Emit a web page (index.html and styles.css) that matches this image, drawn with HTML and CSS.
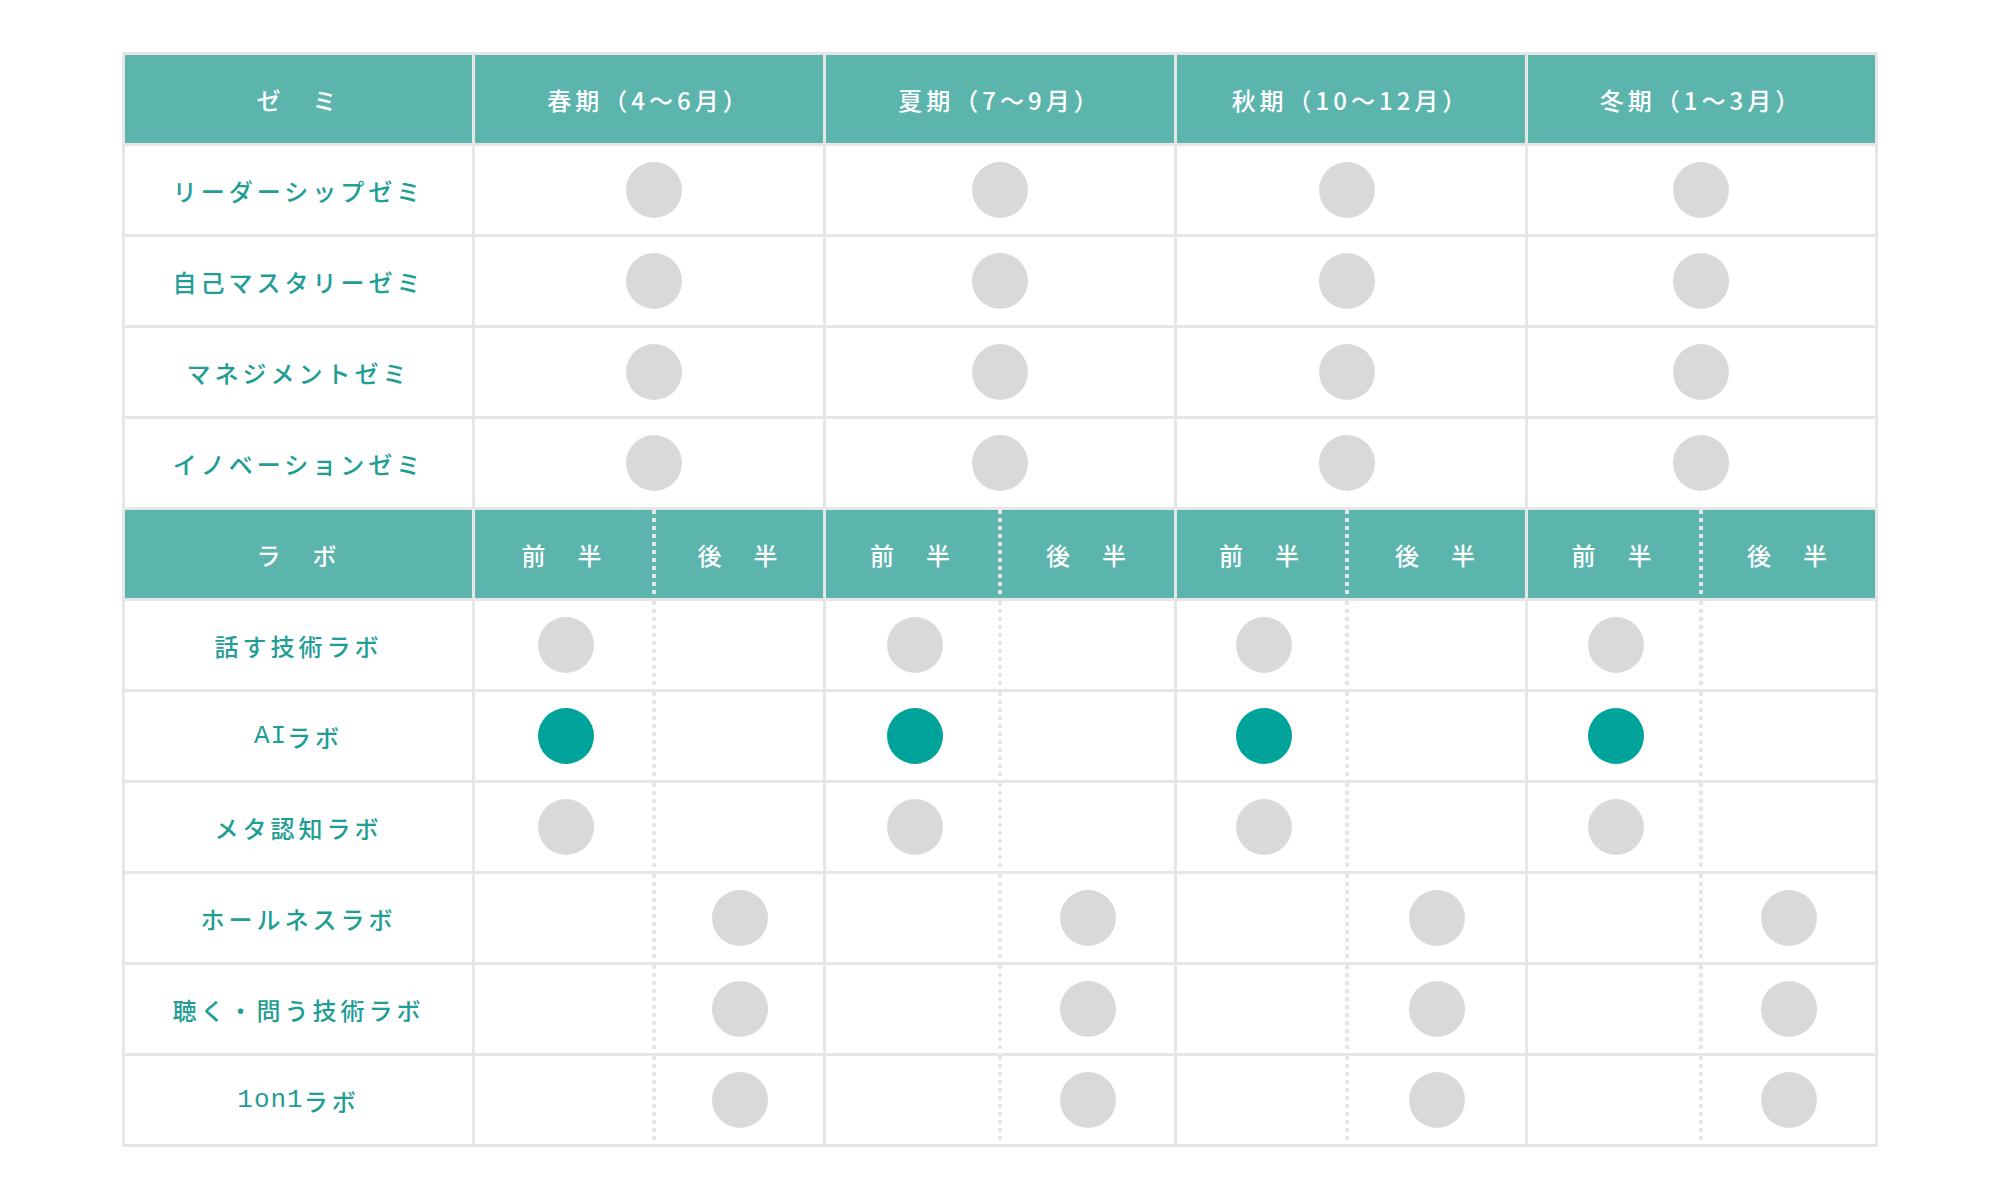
FILE: index.html
```html
<!DOCTYPE html>
<html lang="ja">
<head>
<meta charset="utf-8">
<title>ゼミ・ラボ 年間スケジュール</title>
<link rel="stylesheet" href="styles.css">
</head>
<body>
<div class="schedule">
  <div class="row">
    <div class="cell head">ゼ　ミ</div>
    <div class="cell head">春期（4～6月）</div>
    <div class="cell head">夏期（7～9月）</div>
    <div class="cell head">秋期（10～12月）</div>
    <div class="cell head">冬期（1～3月）</div>
  </div>

  <div class="row">
    <div class="cell label">リーダーシップゼミ</div>
    <div class="cell seminar s1"><span class="dot"></span></div>
    <div class="cell seminar s2"><span class="dot"></span></div>
    <div class="cell seminar s3"><span class="dot"></span></div>
    <div class="cell seminar s4"><span class="dot"></span></div>
  </div>
  <div class="row">
    <div class="cell label">自己マスタリーゼミ</div>
    <div class="cell seminar s1"><span class="dot"></span></div>
    <div class="cell seminar s2"><span class="dot"></span></div>
    <div class="cell seminar s3"><span class="dot"></span></div>
    <div class="cell seminar s4"><span class="dot"></span></div>
  </div>
  <div class="row">
    <div class="cell label">マネジメントゼミ</div>
    <div class="cell seminar s1"><span class="dot"></span></div>
    <div class="cell seminar s2"><span class="dot"></span></div>
    <div class="cell seminar s3"><span class="dot"></span></div>
    <div class="cell seminar s4"><span class="dot"></span></div>
  </div>
  <div class="row">
    <div class="cell label">イノベーションゼミ</div>
    <div class="cell seminar s1"><span class="dot"></span></div>
    <div class="cell seminar s2"><span class="dot"></span></div>
    <div class="cell seminar s3"><span class="dot"></span></div>
    <div class="cell seminar s4"><span class="dot"></span></div>
  </div>

  <div class="row">
    <div class="cell head">ラ　ボ</div>
    <div class="split head s1"><div class="half">前　半</div><div class="line"></div><div class="half">後　半</div></div>
    <div class="split head s2"><div class="half">前　半</div><div class="line"></div><div class="half">後　半</div></div>
    <div class="split head s3"><div class="half">前　半</div><div class="line"></div><div class="half">後　半</div></div>
    <div class="split head s4"><div class="half">前　半</div><div class="line"></div><div class="half">後　半</div></div>
  </div>

  <div class="row">
    <div class="cell label">話す技術ラボ</div>
    <div class="split s1"><div class="half first"><span class="dot"></span></div><div class="line"></div><div class="half"></div></div>
    <div class="split s2"><div class="half first"><span class="dot"></span></div><div class="line"></div><div class="half"></div></div>
    <div class="split s3"><div class="half first"><span class="dot"></span></div><div class="line"></div><div class="half"></div></div>
    <div class="split s4"><div class="half first"><span class="dot"></span></div><div class="line"></div><div class="half"></div></div>
  </div>
  <div class="row">
    <div class="cell label"><span class="latin">AI</span>ラボ</div>
    <div class="split s1"><div class="half first"><span class="dot active"></span></div><div class="line"></div><div class="half"></div></div>
    <div class="split s2"><div class="half first"><span class="dot active"></span></div><div class="line"></div><div class="half"></div></div>
    <div class="split s3"><div class="half first"><span class="dot active"></span></div><div class="line"></div><div class="half"></div></div>
    <div class="split s4"><div class="half first"><span class="dot active"></span></div><div class="line"></div><div class="half"></div></div>
  </div>
  <div class="row">
    <div class="cell label">メタ認知ラボ</div>
    <div class="split s1"><div class="half first"><span class="dot"></span></div><div class="line"></div><div class="half"></div></div>
    <div class="split s2"><div class="half first"><span class="dot"></span></div><div class="line"></div><div class="half"></div></div>
    <div class="split s3"><div class="half first"><span class="dot"></span></div><div class="line"></div><div class="half"></div></div>
    <div class="split s4"><div class="half first"><span class="dot"></span></div><div class="line"></div><div class="half"></div></div>
  </div>
  <div class="row">
    <div class="cell label">ホールネスラボ</div>
    <div class="split s1"><div class="half"></div><div class="line"></div><div class="half"><span class="dot"></span></div></div>
    <div class="split s2"><div class="half"></div><div class="line"></div><div class="half"><span class="dot"></span></div></div>
    <div class="split s3"><div class="half"></div><div class="line"></div><div class="half"><span class="dot"></span></div></div>
    <div class="split s4"><div class="half"></div><div class="line"></div><div class="half"><span class="dot"></span></div></div>
  </div>
  <div class="row">
    <div class="cell label">聴く・問う技術ラボ</div>
    <div class="split s1"><div class="half"></div><div class="line"></div><div class="half"><span class="dot"></span></div></div>
    <div class="split s2"><div class="half"></div><div class="line"></div><div class="half"><span class="dot"></span></div></div>
    <div class="split s3"><div class="half"></div><div class="line"></div><div class="half"><span class="dot"></span></div></div>
    <div class="split s4"><div class="half"></div><div class="line"></div><div class="half"><span class="dot"></span></div></div>
  </div>
  <div class="row">
    <div class="cell label"><span class="latin">1on1</span>ラボ</div>
    <div class="split s1"><div class="half"></div><div class="line"></div><div class="half"><span class="dot"></span></div></div>
    <div class="split s2"><div class="half"></div><div class="line"></div><div class="half"><span class="dot"></span></div></div>
    <div class="split s3"><div class="half"></div><div class="line"></div><div class="half"><span class="dot"></span></div></div>
    <div class="split s4"><div class="half"></div><div class="line"></div><div class="half"><span class="dot"></span></div></div>
  </div>
</div>
</body>
</html>
```
FILE: styles.css
```css
html, body {
  margin: 0;
  padding: 0;
  background: #ffffff;
}

body {
  font-family: "Noto Sans CJK JP", "Noto Sans", sans-serif;
}

.schedule {
  box-sizing: border-box;
  width: 1756px;
  margin: 52px auto 0;
  padding: 3px;
  background: #e6e6e6;
  display: flex;
  flex-direction: column;
  gap: 3px;
}

.row {
  display: grid;
  grid-template-columns: 347px 348px 348px 348px 347px;
  gap: 3px;
  height: 88px;
}

.cell {
  background: #ffffff;
  display: flex;
  align-items: center;
  justify-content: center;
}

.head {
  background: #5bb5ad;
  color: #ffffff;
  font-size: 24px;
  font-weight: 500;
  letter-spacing: 4px;
}

.label {
  color: #1f9e95;
  font-size: 24px;
  font-weight: 500;
  letter-spacing: 4px;
}

.latin {
  font-family: "Liberation Mono", monospace;
  font-size: 26px;
  letter-spacing: 1px;
}

.s1 { --a: 177px; }
.s2 { --a: 172px; }
.s3 { --a: 168px; }
.s4 { --a: 171px; }

.seminar {
  justify-content: flex-start;
}

.seminar .dot {
  margin-left: calc(var(--a) + 2px - 28px);
}

.split {
  display: grid;
  grid-template-columns: var(--a) 4px 1fr;
  background: #ffffff;
}

.split.head {
  background: #5bb5ad;
}

.half {
  display: flex;
  align-items: center;
  justify-content: center;
}

.half.first {
  padding-left: 5px;
}

.line {
  background-image: repeating-linear-gradient(to bottom, #e6e6e6 0, #e6e6e6 4px, transparent 4px, transparent 8px);
}

.dot {
  display: block;
  width: 56px;
  height: 56px;
  border-radius: 50%;
  background: #d9d9d9;
}

.dot.active {
  background: #00a39a;
}
```
